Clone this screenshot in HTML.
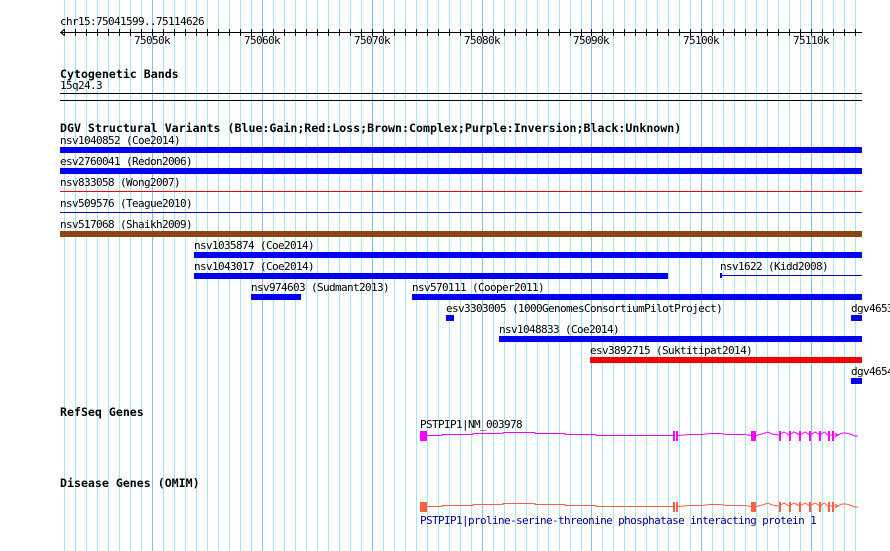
<!DOCTYPE html>
<html><head><meta charset="utf-8"><style>
html,body{margin:0;padding:0;background:#fff;}
svg{display:block;}
text{font-family:"DejaVu Sans Mono","Liberation Mono",monospace;font-size:11px;letter-spacing:-0.62px;fill:#000;}
.b{font-weight:bold;font-size:11.6px;letter-spacing:0;}
</style></head><body>
<svg width="890" height="551" viewBox="0 0 890 551" xmlns="http://www.w3.org/2000/svg" shape-rendering="crispEdges">
<path stroke="#a6e6f0" stroke-width="1" d="M64.5 0V551M75.5 0V551M86.5 0V551M97.5 0V551M108.5 0V551M119.5 0V551M130.5 0V551M141.5 0V551M163.5 0V551M174.5 0V551M185.5 0V551M196.5 0V551M207.5 0V551M218.5 0V551M229.5 0V551M240.5 0V551M251.5 0V551M273.5 0V551M284.5 0V551M295.5 0V551M306.5 0V551M317.5 0V551M328.5 0V551M339.5 0V551M350.5 0V551M361.5 0V551M383.5 0V551M394.5 0V551M405.5 0V551M416.5 0V551M427.5 0V551M438.5 0V551M449.5 0V551M460.5 0V551M471.5 0V551M493.5 0V551M504.5 0V551M515.5 0V551M526.5 0V551M537.5 0V551M548.5 0V551M559.5 0V551M570.5 0V551M581.5 0V551M602.5 0V551M613.5 0V551M624.5 0V551M635.5 0V551M646.5 0V551M657.5 0V551M668.5 0V551M679.5 0V551M690.5 0V551M712.5 0V551M723.5 0V551M734.5 0V551M745.5 0V551M756.5 0V551M767.5 0V551M778.5 0V551M789.5 0V551M800.5 0V551M822.5 0V551M833.5 0V551M844.5 0V551M855.5 0V551"/>
<path stroke="#88bce6" stroke-width="1" d="M152.5 0V551M262.5 0V551M372.5 0V551M482.5 0V551M591.5 0V551M701.5 0V551M811.5 0V551"/>

<text x="60" y="25">chr15:75041599..75114626</text>
<path stroke="#000" d="M60 32.5H862M64.5 29V36M75.5 29V36M86.5 29V36M97.5 29V36M108.5 29V36M119.5 29V36M130.5 29V36M141.5 29V36M152.5 29V36M163.5 29V36M174.5 29V36M185.5 29V36M196.5 29V36M207.5 29V36M218.5 29V36M229.5 29V36M240.5 29V36M251.5 29V36M262.5 29V36M273.5 29V36M284.5 29V36M295.5 29V36M306.5 29V36M317.5 29V36M328.5 29V36M339.5 29V36M350.5 29V36M361.5 29V36M372.5 29V36M383.5 29V36M394.5 29V36M405.5 29V36M416.5 29V36M427.5 29V36M438.5 29V36M449.5 29V36M460.5 29V36M471.5 29V36M482.5 29V36M493.5 29V36M504.5 29V36M515.5 29V36M526.5 29V36M537.5 29V36M548.5 29V36M559.5 29V36M570.5 29V36M581.5 29V36M591.5 29V36M602.5 29V36M613.5 29V36M624.5 29V36M635.5 29V36M646.5 29V36M657.5 29V36M668.5 29V36M679.5 29V36M690.5 29V36M701.5 29V36M712.5 29V36M723.5 29V36M734.5 29V36M745.5 29V36M756.5 29V36M767.5 29V36M778.5 29V36M789.5 29V36M800.5 29V36M811.5 29V36M822.5 29V36M833.5 29V36M844.5 29V36M855.5 29V36M64 29.5L61 32.5L64 35.5" fill="none"/>
<g text-anchor="middle">
<text x="152" y="44">75050k</text><text x="262" y="44">75060k</text><text x="372" y="44">75070k</text><text x="482" y="44">75080k</text><text x="591" y="44">75090k</text><text x="701" y="44">75100k</text><text x="811" y="44">75110k</text>
</g>

<text class="b" x="60" y="78">Cytogenetic Bands</text>
<text x="60" y="89">15q24.3</text>
<rect x="60" y="93" width="802" height="1" fill="#000"/>
<rect x="60" y="100" width="802" height="1" fill="#000"/>

<text class="b" x="60" y="132">DGV Structural Variants (Blue:Gain;Red:Loss;Brown:Complex;Purple:Inversion;Black:Unknown)</text>

<text x="60" y="144">nsv1040852 (Coe2014)</text>
<rect x="60" y="147" width="802" height="6" fill="#0000f0"/>
<text x="60" y="165">esv2760041 (Redon2006)</text>
<rect x="60" y="168" width="802" height="6" fill="#0000f0"/>
<text x="60" y="186">nsv833058 (Wong2007)</text>
<rect x="60" y="191" width="802" height="1" fill="#f00000"/>
<text x="60" y="207">nsv509576 (Teague2010)</text>
<rect x="60" y="212" width="802" height="1" fill="#0000c8"/>
<text x="60" y="228">nsv517068 (Shaikh2009)</text>
<rect x="60" y="231" width="802" height="6" fill="#8b4513"/>

<text x="194" y="249">nsv1035874 (Coe2014)</text>
<rect x="194" y="252" width="668" height="6" fill="#0000f0"/>
<text x="194" y="270">nsv1043017 (Coe2014)</text>
<rect x="194" y="273" width="474" height="6" fill="#0000f0"/>
<text x="720" y="270">nsv1622 (Kidd2008)</text>
<rect x="720" y="275" width="142" height="1" fill="#0000c8"/>
<rect x="720" y="273" width="2" height="5" fill="#0000c8"/>
<text x="251" y="291">nsv974603 (Sudmant2013)</text>
<rect x="251" y="294" width="50" height="6" fill="#0000f0"/>
<text x="412" y="291">nsv570111 (Cooper2011)</text>
<rect x="412" y="294" width="450" height="6" fill="#0000f0"/>
<text x="446" y="312">esv3303005 (1000GenomesConsortiumPilotProject)</text>
<rect x="446" y="315" width="8" height="6" fill="#0000f0"/>
<text x="851" y="312">dgv4653</text>
<rect x="851" y="315" width="11" height="6" fill="#0000f0"/>
<text x="499" y="333">nsv1048833 (Coe2014)</text>
<rect x="499" y="336" width="363" height="6" fill="#0000f0"/>
<text x="590" y="354">esv3892715 (Suktitipat2014)</text>
<rect x="590" y="357" width="272" height="6" fill="#f00000"/>
<text x="851" y="375">dgv4654</text>
<rect x="851" y="378" width="11" height="6" fill="#0000f0"/>

<text class="b" x="60" y="416">RefSeq Genes</text>
<text x="420" y="428">PSTPIP1|NM_003978</text>
<g stroke="#ff00ff" fill="none" shape-rendering="auto">
<polyline points="427,435.5 442,435.5 442,434.5 473,434.5 473,433.5 503,433.5 503,432.5 535,432.5 535,433.5 565,433.5 565,434.5 596,434.5 596,435.5 673,435.5"/>
<polyline points="678,435.5 690,434.5 702,434.5 710,433.5 720,433.5 727,434.5 745,434.5 751,435.5"/>
<polyline points="756,435.5 762,434 768,432 772,434 779,435 784,432 789,435 794,432 800,435 805,432 810,435 815,432 820,435 824,432 828,435 833,435 838,435 842,433 846,433 850,434 855,436 858,436"/>
<polyline points="835,433 838,435 835,437"/>
</g>
<g fill="#ff00ff">
<rect x="420" y="431" width="7" height="10"/>
<rect x="673" y="431" width="2" height="10"/><rect x="676" y="431" width="2" height="10"/>
<rect x="751" y="431" width="5" height="10"/>
<rect x="779" y="431" width="2" height="10"/><rect x="789" y="431" width="2" height="10"/><rect x="799" y="431" width="2" height="10"/><rect x="809" y="431" width="2" height="10"/><rect x="819" y="431" width="2" height="10"/><rect x="828" y="431" width="2" height="10"/><rect x="832" y="431" width="2" height="10"/>
</g>

<text class="b" x="60" y="487">Disease Genes (OMIM)</text>
<g stroke="#ff6040" fill="none" shape-rendering="auto">
<polyline points="427,506.5 442,506.5 442,505.5 473,505.5 473,504.5 503,504.5 503,503.5 535,503.5 535,504.5 565,504.5 565,505.5 596,505.5 596,506.5 673,506.5"/>
<polyline points="678,506.5 690,505.5 702,505.5 710,504.5 720,504.5 727,505.5 745,505.5 751,506.5"/>
<polyline points="756,506.5 762,505 768,503 772,505 779,506 784,503 789,506 794,503 800,506 805,503 810,506 815,503 820,506 824,503 828,506 833,506 838,506 842,504 846,504 850,505 855,507 858,507"/>
<polyline points="835,504 838,506 835,508"/>
</g>
<g fill="#ff6040">
<rect x="420" y="502" width="7" height="10"/>
<rect x="673" y="502" width="2" height="10"/><rect x="676" y="502" width="2" height="10"/>
<rect x="751" y="502" width="5" height="10"/>
<rect x="779" y="502" width="2" height="10"/><rect x="789" y="502" width="2" height="10"/><rect x="799" y="502" width="2" height="10"/><rect x="809" y="502" width="2" height="10"/><rect x="819" y="502" width="2" height="10"/><rect x="828" y="502" width="2" height="10"/><rect x="832" y="502" width="2" height="10"/>
</g>
<text x="420" y="524" style="fill:#000080">PSTPIP1|proline-serine-threonine phosphatase interacting protein 1</text>
</svg>
</body></html>
